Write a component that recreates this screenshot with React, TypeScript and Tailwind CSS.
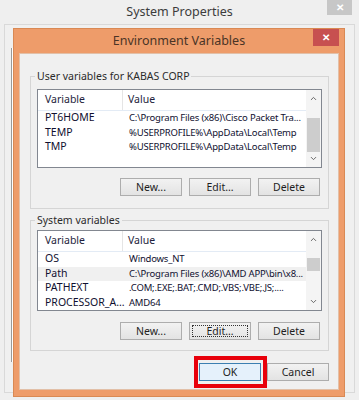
import { ChevronUp, ChevronDown } from "lucide-react"

type Row = { name: string; value: string; selected?: boolean }

const USER_VARS: Row[] = [
  { name: "PT6HOME", value: "C:\\Program Files (x86)\\Cisco Packet Tra..." },
  { name: "TEMP", value: "%USERPROFILE%\\AppData\\Local\\Temp" },
  { name: "TMP", value: "%USERPROFILE%\\AppData\\Local\\Temp" },
]

const SYSTEM_VARS: Row[] = [
  { name: "OS", value: "Windows_NT" },
  { name: "Path", value: "C:\\Program Files (x86)\\AMD APP\\bin\\x8...", selected: true },
  { name: "PATHEXT", value: ".COM;.EXE;.BAT;.CMD;.VBS;.VBE;.JS;...." },
  { name: "PROCESSOR_A...", value: "AMD64" },
]

function WinButton({ label, focused }: { label: string; focused?: boolean }) {
  return (
    <button className="w-[62px] h-[18px] p-[2px] border border-[#adadad] bg-gradient-to-b from-[#f2f2f2] to-[#e3e3e3] text-[10.5px] text-[#1e1e1e] leading-none">
      <span className={"flex items-center justify-center w-full h-full " + (focused ? "border border-dotted border-[#333]" : "")}>
        {label}
      </span>
    </button>
  )
}

function VarList({ rows, height, thumbTop, thumbHeight }: { rows: Row[]; height: number; thumbTop: string; thumbHeight: string }) {
  return (
    <div className="flex border border-[#828790] bg-white" style={{ height }}>
      <div className="flex-1 flex flex-col min-w-0">
        <div className="flex h-[21px] border-b border-[#e3ebf5] text-[10.5px] text-[#1e1e3c]">
          <div className="w-[85px] pl-[7px] flex items-center border-r border-[#e5e5e5]">Variable</div>
          <div className="flex-1 pl-[5px] flex items-center">Value</div>
        </div>
        {rows.map((r) => (
          <div key={r.name} className={"flex h-[14.5px] items-center text-[10.5px] text-[#101030] whitespace-nowrap " + (r.selected ? "bg-[#f0f0f0]" : "")}>
            <div className="w-[85px] shrink-0 pl-[7px]">{r.name}</div>
            <div className="flex-1 pl-[6px] text-[9.5px] tracking-[-0.2px]">{r.value}</div>
          </div>
        ))}
      </div>
      {/* scrollbar */}
      <div className="w-[15px] flex flex-col bg-[#f4f4f4]">
        <div className="h-[17px] flex items-center justify-center text-[#606060]">
          <ChevronUp size={9} strokeWidth={2.5} />
        </div>
        <div className="flex-1 relative">
          <div className={"absolute left-[1px] right-[1px] bg-[#cdcdcd] " + thumbTop + " " + thumbHeight} />
        </div>
        <div className="h-[17px] flex items-center justify-center text-[#606060]">
          <ChevronDown size={9} strokeWidth={2.5} />
        </div>
      </div>
    </div>
  )
}

function GroupBox({ title, children, className }: { title: string; children: React.ReactNode; className: string }) {
  return (
    <div className={"relative border border-[#d5d5d5] px-[6px] " + className}>
      <span className="absolute -top-[8px] left-[4px] px-[2px] bg-[#f0f0f0] text-[10.5px] text-[#2b2b2b] leading-[14px]">{title}</span>
      {children}
    </div>
  )
}

export default function App() {
  return (
    <div className="relative w-[359px] h-[400px] overflow-hidden bg-[#efefef] font-['Noto_Sans',sans-serif]">
      {/* System Properties window (behind) */}
      <div className="h-[24px] flex items-center justify-center text-[12.5px] text-[#3c3c3c]">System Properties</div>
      <div className="absolute right-[7px] top-0 w-[25px] h-[15px] bg-[#c7c7c7] flex items-center justify-center text-white text-[10px] font-bold">✕</div>
      <div className="mx-[4px] h-[369px] border border-[#d9d9d9] bg-[#f0f0f0] pt-[23px] pl-[6px]">
        <div className="w-[3px] h-[314px] border-x border-[#9a9a9a] bg-white" />
      </div>

      {/* Environment Variables dialog */}
      <div className="absolute left-[13px] top-[28px] w-[332px] h-[369px] bg-[#ee9c6a] border border-[#d98954] flex flex-col px-[5px] pb-[6px]">
        <div className="relative h-[24px] flex items-center justify-center text-[12.5px] text-[#4a3426]">
          Environment Variables
          <div className="absolute right-[0px] top-0 w-[26px] h-[17px] bg-[#c75050] flex items-center justify-center text-white text-[10px] font-bold">✕</div>
        </div>
        <div className="flex-1 bg-[#f0f0f0] border border-[#e2c0a8] flex flex-col pl-[10px] pr-[9px]">
          <GroupBox title="User variables for KABAS CORP" className="mt-[22px] h-[133px] pt-[12px]">
            <VarList rows={USER_VARS} height={79} thumbTop="top-[11px]" thumbHeight="h-[34px]" />
            <div className="flex justify-end gap-[7px] mt-[10px] pr-[2px]">
              <WinButton label="New..." />
              <WinButton label="Edit..." />
              <WinButton label="Delete" />
            </div>
          </GroupBox>
          <GroupBox title="System variables" className="mt-[11px] h-[131px] pt-[9px]">
            <VarList rows={SYSTEM_VARS} height={81} thumbTop="top-[10px]" thumbHeight="h-[13px]" />
            <div className="flex justify-end gap-[7px] mt-[11px] pr-[2px]">
              <WinButton label="New..." />
              <WinButton label="Edit..." focused />
              <WinButton label="Delete" />
            </div>
          </GroupBox>
          <div className="flex justify-end gap-[6px] mt-[12px]">
            <button className="w-[62px] h-[18px] border border-[#3c7fb1] bg-[#e5f1fb] text-[10.5px] text-[#1e1e1e] leading-none">OK</button>
            <button className="w-[62px] h-[18px] border border-[#adadad] bg-gradient-to-b from-[#f2f2f2] to-[#e3e3e3] text-[10.5px] text-[#1e1e1e] leading-none">Cancel</button>
          </div>
        </div>
      </div>

      {/* highlight annotation */}
      <div className="absolute left-[194px] top-[356px] w-[73px] h-[32px] border-[4px] border-[#e8000b]" />
    </div>
  )
}
